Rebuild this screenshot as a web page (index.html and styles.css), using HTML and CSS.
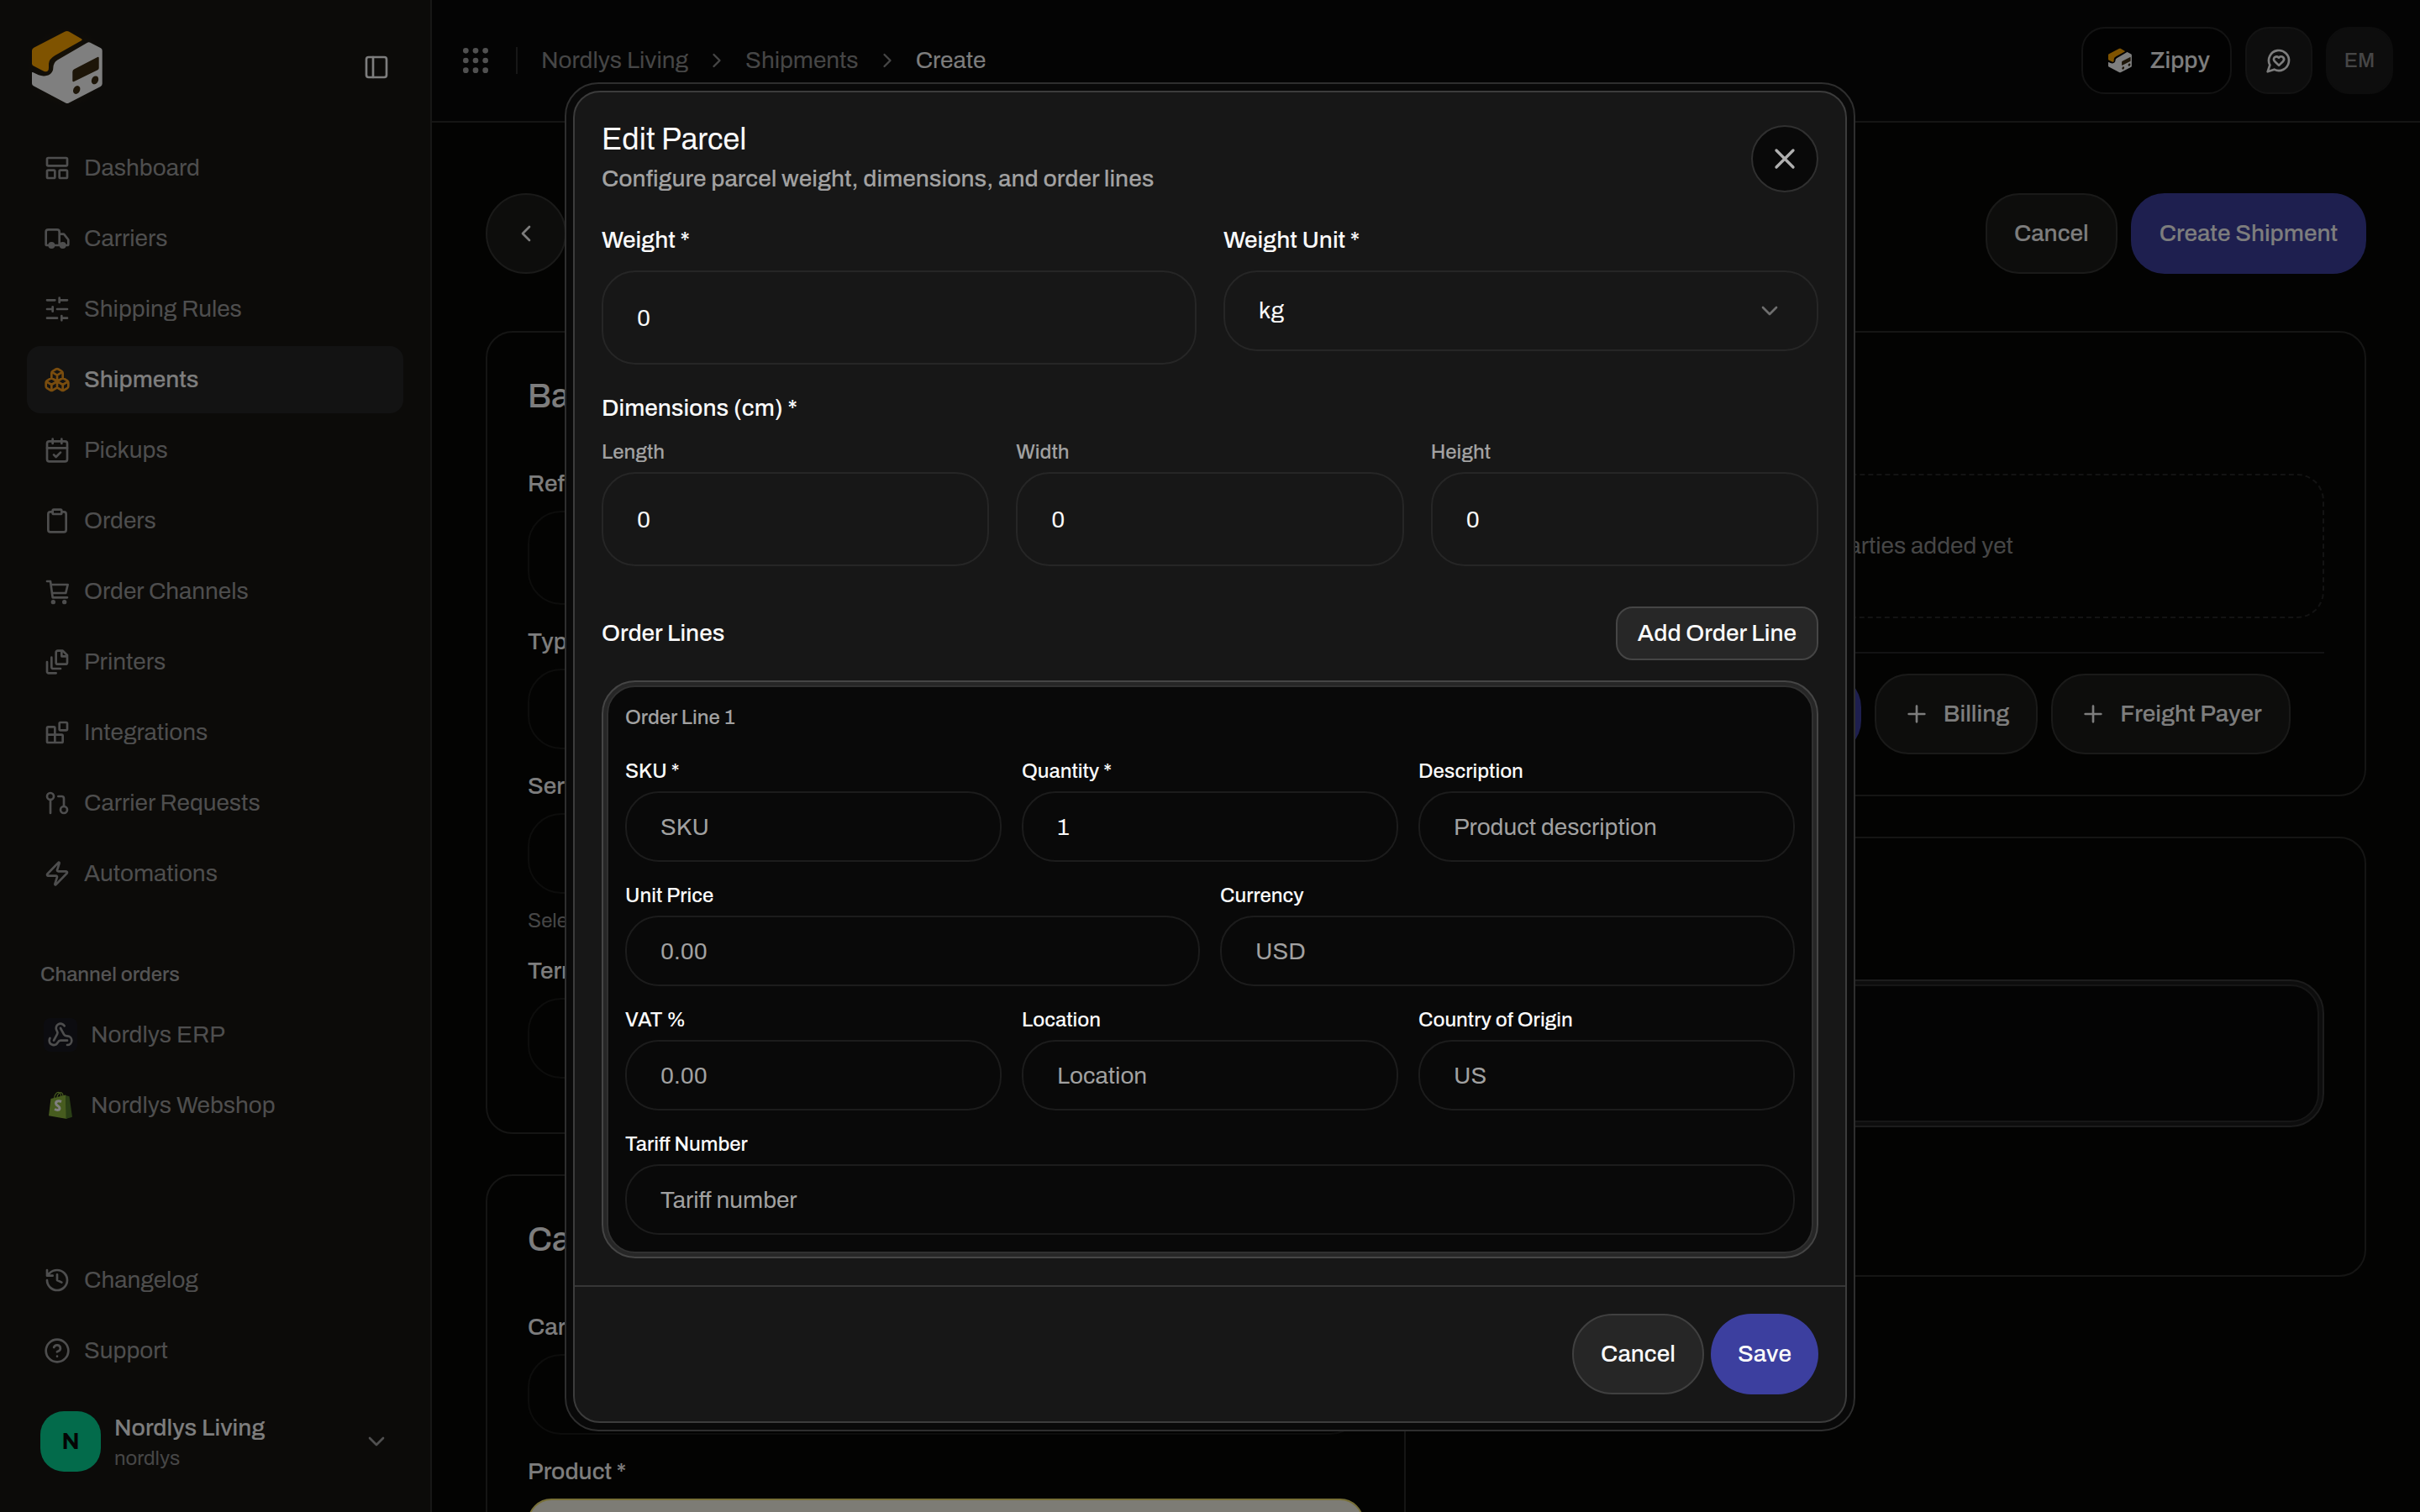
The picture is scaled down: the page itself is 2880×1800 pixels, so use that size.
FILE: index.html
```html
<!DOCTYPE html>
<html lang="en">
<head>
    <title>Create Shipment</title>
    <meta charset="UTF-8">
    <meta name="viewport" content="width=device-width, initial-scale=1.0">
    <link rel="stylesheet" href="styles.css">
</head>
<body>
    <!-- shared shapes -->
    <svg class="sprite" aria-hidden="true">
        <symbol id="logo" viewBox="0 0 96 96">
            <path fill="#ffa600" d="M45.500 5.600q2.200-1.200 4.400 0L65 14.200q1.600 1 0 2L33.500 34Q26 38.500 26 44v4.500q0 6.500-6 4.200L7.500 46.300Q6 45.400 6 43.500V28.500q0-2.500 2.300-3.800z"/>
            <path fill="#fff" d="M72 18.700q1.700-1 3.400 0L88 25.300q1.700 1 1.700 3V67.500q0 2.300-2 3.400L50 90.600q-2 1-4 0L7.800 70.300Q6 69.300 6 67.300V54.500q0-1 1-.4C13 57 17 59 21 58.400 28 58 31.300 53.500 31.300 49q0-6.500 5-9.600z"/>
            <path fill="#3a2a10" d="M56.500 50.200 84 35.900q1.700-.7 1.700 1V49q0 1.500-1.400 2.200L56.200 64.900q-1.900.8-1.900-1V53.500q0-2.200 2.200-3.300z"/>
            <ellipse cx="59.200" cy="75" rx="3.900" ry="5.200" transform="rotate(28 59.200 75)" fill="#3a2a10"/>
            <ellipse cx="81" cy="63.400" rx="3.900" ry="5.200" transform="rotate(28 81 63.400)" fill="#3a2a10"/>
        </symbol>
        <symbol id="chevron-down" viewBox="0 0 24 24"><path d="m6 9 6 6 6-6"/></symbol>
        <symbol id="chevron-right" viewBox="0 0 24 24"><path d="m9 18 6-6-6-6"/></symbol>
        <symbol id="plus" viewBox="0 0 24 24"><path d="M5 12h14M12 5v14"/></symbol>
    </svg>

    <div class="app">
        <aside class="sidebar">
            <div class="sidebar-head">
                <svg class="logo"><use href="#logo"/></svg>
                <button class="toggle" type="button" aria-label="Toggle sidebar">
                    <svg class="icon" viewBox="0 0 24 24"><rect x="3" y="3" width="18" height="18" rx="2"/><path d="M9 3v18"/></svg>
                </button>
            </div>

            <nav class="nav">
                <a class="nav-item" href="#">
                    <svg class="icon" viewBox="0 0 24 24"><rect x="3" y="3" width="18" height="7" rx="1"/><rect x="3" y="14" width="7" height="7" rx="1"/><rect x="14" y="14" width="7" height="7" rx="1"/></svg>
                    Dashboard
                </a>
                <a class="nav-item" href="#">
                    <svg class="icon" viewBox="0 0 24 24"><path d="M14 18V6a2 2 0 0 0-2-2H4a2 2 0 0 0-2 2v11a1 1 0 0 0 1 1h2M15 18H9M19 18h2a1 1 0 0 0 1-1v-3.650a1 1 0 0 0-.22-.624l-3.480-4.350A1 1 0 0 0 17.520 8H14"/><circle class="solid" cx="17" cy="18" r="2"/><circle class="solid" cx="7" cy="18" r="2"/></svg>
                    Carriers
                </a>
                <a class="nav-item" href="#">
                    <svg class="icon" viewBox="0 0 24 24"><path d="M21 4h-7M10 4H3M21 12h-9M8 12H3M21 20h-5M12 20H3M14 2v4M8 10v4M16 18v4"/></svg>
                    Shipping Rules
                </a>
                <a class="nav-item active" href="#">
                    <svg class="icon" viewBox="0 0 24 24"><path d="M2.970 12.920A2 2 0 0 0 2 14.630v3.240a2 2 0 0 0 .97 1.710l3 1.800a2 2 0 0 0 2.060 0L12 19v-5.500l-5-3-4.030 2.420ZM7 16.500l-4.740-2.850M7 16.500l5-3M7 16.500v5.170M12 13.500V19l3.970 2.380a2 2 0 0 0 2.060 0l3-1.800a2 2 0 0 0 .97-1.710v-3.240a2 2 0 0 0-.97-1.710L17 10.500l-5 3ZM17 16.500l-5-3M17 16.500l4.740-2.850M17 16.500v5.170M7.970 4.420A2 2 0 0 0 7 6.130v4.370l5 3 5-3V6.130a2 2 0 0 0-.97-1.710l-3-1.800a2 2 0 0 0-2.060 0l-3 1.800ZM12 8 7.260 5.150M12 8l4.740-2.850M12 13.500V8"/></svg>
                    Shipments
                </a>
                <a class="nav-item" href="#">
                    <svg class="icon" viewBox="0 0 24 24"><path d="M8 2v4M16 2v4M3 10h18M9 16l2 2 4-4"/><rect x="3" y="4" width="18" height="18" rx="2"/></svg>
                    Pickups
                </a>
                <a class="nav-item" href="#">
                    <svg class="icon" viewBox="0 0 24 24"><rect x="8" y="2" width="8" height="4" rx="1"/><path d="M16 4h2a2 2 0 0 1 2 2v14a2 2 0 0 1-2 2H6a2 2 0 0 1-2-2V6a2 2 0 0 1 2-2h2"/></svg>
                    Orders
                </a>
                <a class="nav-item" href="#">
                    <svg class="icon" viewBox="0 0 24 24"><path d="M3 3h3l2 14.500h13M6.500 6H21.500l-1.800 7.500H7.500"/><circle class="solid" cx="8.500" cy="21.500" r="1"/><circle class="solid" cx="18.500" cy="21.500" r="1"/></svg>
                    Order Channels
                </a>
                <a class="nav-item" href="#">
                    <svg class="icon" viewBox="0 0 24 24"><path d="M16 2v5h5M21 6v6.500c0 .8-.7 1.500-1.500 1.500h-7c-.8 0-1.500-.7-1.500-1.500v-9c0-.8.7-1.500 1.500-1.500H17l4 4zM7 8v8.800c0 .3.200.6.400.8.200.2.500.4.800.4H15M3 12v8.800c0 .3.200.6.400.8.200.2.500.4.800.4H11"/></svg>
                    Printers
                </a>
                <a class="nav-item" href="#">
                    <svg class="icon" viewBox="0 0 24 24"><rect x="14" y="3" width="7" height="7" rx="1"/><path d="M10 21V8a1 1 0 0 0-1-1H4a1 1 0 0 0-1 1v12a1 1 0 0 0 1 1h12a1 1 0 0 0 1-1v-5a1 1 0 0 0-1-1H3"/></svg>
                    Integrations
                </a>
                <a class="nav-item" href="#">
                    <svg class="icon" viewBox="0 0 24 24"><circle cx="18" cy="18" r="3"/><circle cx="6" cy="6" r="3"/><path d="M13 6h3a2 2 0 0 1 2 2v7M6 9v12"/></svg>
                    Carrier Requests
                </a>
                <a class="nav-item" href="#">
                    <svg class="icon" viewBox="0 0 24 24"><path d="M4 14a1 1 0 0 1-.78-1.630l9.900-10.200a.5.5 0 0 1 .86.460l-1.920 6.020A1 1 0 0 0 13 10h7a1 1 0 0 1 .78 1.630l-9.900 10.200a.5.5 0 0 1-.86-.46l1.920-6.020A1 1 0 0 0 11 14z"/></svg>
                    Automations
                </a>
            </nav>

            <nav class="nav channels">
                <div class="nav-label">Channel orders</div>
                <a class="nav-item" href="#">
                    <span class="channel-icon webhook">
                        <svg class="icon" viewBox="0 0 24 24"><path d="M18 16.980h-5.990c-1.100 0-1.950.94-2.480 1.900A4 4 0 0 1 2 17c.01-.7.200-1.400.57-2M6 17l3.130-5.780c.53-.97.100-2.180-.5-3.100a4 4 0 1 1 6.890-4.060M12 6l3.130 5.730C15.660 12.700 16.900 13 18 13a4 4 0 0 1 0 8"/></svg>
                    </span>
                    Nordlys ERP
                </a>
                <a class="nav-item" href="#">
                    <svg class="channel-icon" viewBox="0 0 40 40">
                        <path fill="none" stroke="#8fb83f" stroke-width="1.200" d="M12.500 11c.5-4 3-7 5.500-6.500 2 .4 2.500 3 2.500 5.500M16 10c.5-3 3-6 5-5.300 1.800.7 2 3 2 4.300"/>
                        <path fill="#8fb83f" d="M8.500 12 26 7.500 27.500 36 6 32.200z"/>
                        <path fill="#557f2c" d="m26 7.500 1 .8 3.500 1L34 33.800 26.500 36z"/>
                        <path fill="none" stroke="#fff" stroke-width="3" d="M21 15.500c-3.500-1.500-6.500-.5-6.500 2 0 3 4.500 3 4.500 5.700 0 2.400-2.800 2.800-6 1.300"/>
                    </svg>
                    Nordlys Webshop
                </a>
            </nav>

            <nav class="nav sidebar-foot">
                <a class="nav-item" href="#">
                    <svg class="icon" viewBox="0 0 24 24"><path d="M3 12a9 9 0 1 0 9-9 9.750 9.750 0 0 0-6.740 2.740L3 8M3 3v5h5M12 7v5l4 2"/></svg>
                    Changelog
                </a>
                <a class="nav-item" href="#">
                    <svg class="icon" viewBox="0 0 24 24"><circle cx="12" cy="12" r="10"/><path d="M9.090 9a3 3 0 0 1 5.830 1c0 2-3 3-3 3M12 17h.01"/></svg>
                    Support
                </a>
            </nav>

            <button class="account" type="button">
                <span class="avatar">N</span>
                <span class="account-text">
                    <span class="account-name">Nordlys Living</span>
                    <span class="account-slug">nordlys</span>
                </span>
                <svg class="icon"><use href="#chevron-down"/></svg>
            </button>
        </aside>

        <div class="page">
            <header class="topbar">
                <svg class="grip" viewBox="0 0 24 24"><circle cx="5" cy="5" r="2"/><circle cx="12" cy="5" r="2"/><circle cx="19" cy="5" r="2"/><circle cx="5" cy="12" r="2"/><circle cx="12" cy="12" r="2"/><circle cx="19" cy="12" r="2"/><circle cx="5" cy="19" r="2"/><circle cx="12" cy="19" r="2"/><circle cx="19" cy="19" r="2"/></svg>
                <span class="divider"></span>
                <nav class="breadcrumb">
                    <a href="#">Nordlys Living</a>
                    <svg class="icon"><use href="#chevron-right"/></svg>
                    <a href="#">Shipments</a>
                    <svg class="icon"><use href="#chevron-right"/></svg>
                    <span class="current">Create</span>
                </nav>
                <div class="topbar-actions">
                    <button class="top-btn zippy" type="button"><svg><use href="#logo"/></svg>Zippy</button>
                    <button class="top-btn square" type="button" aria-label="Feedback">
                        <svg class="icon" viewBox="0 0 24 24"><path d="M7.900 20A9 9 0 1 0 4 16.100L2 22Z"/><path d="M15.800 9.200a2.500 2.500 0 0 0-3.500 0l-.3.400-.35-.3a2.420 2.420 0 1 0-3.200 3.600l3.600 3.500 3.600-3.500c1.200-1.200 1.100-2.700.2-3.700"/></svg>
                    </button>
                    <button class="top-btn square user" type="button">EM</button>
                </div>
            </header>

            <main class="main">
                <div class="page-head">
                    <button class="btn back" type="button" aria-label="Back">
                        <svg class="icon" viewBox="0 0 24 24"><path d="m15 18-6-6 6-6"/></svg>
                    </button>
                    <div class="page-actions">
                        <button class="btn" type="button">Cancel</button>
                        <button class="btn primary" type="button">Create Shipment</button>
                    </div>
                </div>

                <div class="columns">
                    <div class="column">
                        <section class="card form-card">
                            <h2>Basic</h2>
                            <div class="page-field">
                                <label for="reference">Reference</label>
                                <input class="tall" type="text" id="reference">
                            </div>
                            <div class="page-field">
                                <label for="type">Type</label>
                                <input type="text" id="type">
                            </div>
                            <div class="page-field">
                                <label for="service">Service</label>
                                <input type="text" id="service">
                                <p class="hint">Select</p>
                            </div>
                            <div class="page-field">
                                <label for="terms">Terms</label>
                                <input type="text" id="terms">
                            </div>
                        </section>
                        <section class="card form-card">
                            <h2>Carrier</h2>
                            <div class="page-field">
                                <label for="carrier">Carrier</label>
                                <input type="text" id="carrier">
                            </div>
                            <div class="page-field">
                                <label for="product">Product *</label>
                                <input class="warning" type="text" id="product">
                            </div>
                        </section>
                    </div>

                    <div class="column">
                        <section class="card">
                            <h2>Parties</h2>
                            <div class="empty">No parties added yet</div>
                            <div class="party-buttons">
                                <button class="btn primary" type="button"><svg class="icon"><use href="#plus"/></svg>Sender</button>
                                <button class="btn primary" type="button"><svg class="icon"><use href="#plus"/></svg>Receiver</button>
                                <button class="btn" type="button"><svg class="icon"><use href="#plus"/></svg>Billing</button>
                                <button class="btn" type="button"><svg class="icon"><use href="#plus"/></svg>Freight Payer</button>
                            </div>
                        </section>
                        <section class="card">
                            <h2>Parcels</h2>
                            <div class="parcel"><div class="parcel-inner">Parcel 1</div></div>
                            <button class="btn add-parcel" type="button">Add Parcel</button>
                        </section>
                    </div>
                </div>
            </main>
        </div>
    </div>

    <div class="overlay">
        <div class="modal" role="dialog" aria-labelledby="modal-title">
            <form class="modal-card">
                <div class="modal-body">
                    <div class="modal-head">
                        <div>
                            <h1 id="modal-title">Edit Parcel</h1>
                            <p>Configure parcel weight, dimensions, and order lines</p>
                        </div>
                        <button class="close" type="button" aria-label="Close">
                            <svg class="icon" viewBox="0 0 24 24"><path d="M18 6 6 18M6 6l12 12"/></svg>
                        </button>
                    </div>

                    <div class="grid two">
                        <div class="field">
                            <label for="weight">Weight *</label>
                            <input type="number" id="weight" value="0">
                        </div>
                        <div class="field">
                            <label for="unit">Weight Unit *</label>
                            <div class="select">
                                <select id="unit"><option>kg</option><option>lb</option></select>
                                <svg class="icon"><use href="#chevron-down"/></svg>
                            </div>
                        </div>
                    </div>

                    <div class="dimensions">
                        <h3>Dimensions (cm) *</h3>
                        <div class="grid three">
                            <div class="field small">
                                <label for="length">Length</label>
                                <input type="number" id="length" value="0">
                            </div>
                            <div class="field small">
                                <label for="width">Width</label>
                                <input type="number" id="width" value="0">
                            </div>
                            <div class="field small">
                                <label for="height">Height</label>
                                <input type="number" id="height" value="0">
                            </div>
                        </div>
                    </div>

                    <div class="lines-head">
                        <h3>Order Lines</h3>
                        <button class="add-line" type="button">Add Order Line</button>
                    </div>

                    <div class="line">
                        <div class="line-inner">
                            <h4>Order Line 1</h4>
                            <div class="grid three">
                                <div class="field compact">
                                    <label for="sku">SKU *</label>
                                    <input type="text" id="sku" placeholder="SKU">
                                </div>
                                <div class="field compact">
                                    <label for="quantity">Quantity *</label>
                                    <input type="number" id="quantity" value="1">
                                </div>
                                <div class="field compact">
                                    <label for="description">Description</label>
                                    <input type="text" id="description" placeholder="Product description">
                                </div>
                            </div>
                            <div class="grid two">
                                <div class="field compact">
                                    <label for="price">Unit Price</label>
                                    <input type="text" id="price" placeholder="0.00">
                                </div>
                                <div class="field compact">
                                    <label for="currency">Currency</label>
                                    <input type="text" id="currency" placeholder="USD">
                                </div>
                            </div>
                            <div class="grid three">
                                <div class="field compact">
                                    <label for="vat">VAT %</label>
                                    <input type="text" id="vat" placeholder="0.00">
                                </div>
                                <div class="field compact">
                                    <label for="location">Location</label>
                                    <input type="text" id="location" placeholder="Location">
                                </div>
                                <div class="field compact">
                                    <label for="origin">Country of Origin</label>
                                    <input type="text" id="origin" placeholder="US">
                                </div>
                            </div>
                            <div class="field compact">
                                <label for="tariff">Tariff Number</label>
                                <input type="text" id="tariff" placeholder="Tariff number">
                            </div>
                        </div>
                    </div>
                </div>

                <div class="modal-foot">
                    <button class="btn round" type="button">Cancel</button>
                    <button class="btn round primary" type="submit">Save</button>
                </div>
            </form>
        </div>
    </div>
</body>
</html>
```

FILE: styles.css
```css
* {
  box-sizing: border-box;
}

body {
  margin: 0;
  font-family: Archivo, "Liberation Sans", Arial, sans-serif;
  font-size: 28px;
  line-height: 40px;
  background-color: #060604;
  color: #fafafa;
}

h1, h2, h3, h4, p {
  margin: 0;
  font-weight: normal;
}

button, input, select {
  font: inherit;
  color: inherit;
}

button, label, h2, h3, h4 {
  font-weight: 500;
}

h3 {
  font-size: 28px;
}

button {
  cursor: pointer;
}

a {
  color: inherit;
  text-decoration: none;
}

.sprite {
  display: none;
}

.icon {
  width: 32px;
  height: 32px;
  flex: none;
  fill: none;
  stroke: currentColor;
  stroke-width: 2;
  stroke-linecap: round;
  stroke-linejoin: round;
}

.solid {
  fill: currentColor;
}

.app {
  display: flex;
  height: 100vh;
  overflow: hidden;
}

/* sidebar */
.sidebar {
  display: flex;
  flex-direction: column;
  flex: none;
  width: 514px;
  padding: 32px;
  background-color: #181613;
  border-right: 2px solid #2e2e2d;
}

.sidebar-head {
  display: flex;
  align-items: center;
  justify-content: space-between;
  margin-bottom: 32px;
}

.logo {
  width: 96px;
  height: 96px;
  background: radial-gradient(#34260c, #181613 72%);
}

.toggle {
  display: flex;
  padding: 16px;
  background: none;
  border: none;
}

.nav {
  display: flex;
  flex-direction: column;
  gap: 4px;
}

.nav-item {
  display: flex;
  align-items: center;
  gap: 16px;
  height: 80px;
  padding: 0 20px;
  border-radius: 16px;
  color: #9c9c9c;
}

.nav-item.active {
  background-color: #262626;
  color: #fafafa;
  font-weight: 500;
}

.nav-item.active .icon {
  color: #f59a1c;
}

.channels {
  margin-top: 48px;
}

.nav-label {
  padding: 0 16px;
  margin-bottom: -4px;
  font-size: 24px;
  font-weight: 500;
  line-height: 64px;
  color: #a8a8a8;
}

.channel-icon {
  display: flex;
  align-items: center;
  justify-content: center;
  width: 40px;
  height: 40px;
}

.webhook {
  background-color: #191921;
  border-radius: 8px;
}

.sidebar-foot {
  margin-top: auto;
}

.account {
  display: flex;
  align-items: center;
  gap: 16px;
  margin-top: 16px;
  padding: 16px;
  background: none;
  border: none;
  text-align: left;
}

.account .icon {
  margin-left: auto;
  color: #a1a1a1;
}

.avatar {
  width: 72px;
  line-height: 72px;
  border-radius: 28px;
  background-color: #06d696;
  color: #0a0a0a;
  font-weight: bold;
  text-align: center;
}

.account-text {
  display: flex;
  flex-direction: column;
}

.account-slug {
  font-size: 24px;
  font-weight: 400;
  line-height: 32px;
  color: #8c8c8c;
}

/* top bar */
.page {
  flex: 1;
  min-width: 0;
}

.topbar {
  display: flex;
  align-items: center;
  gap: 28px;
  padding: 32px;
  background-color: #090909;
  border-bottom: 2px solid #2a2a28;
}

.grip {
  width: 40px;
  height: 40px;
  fill: #a1a1a1;
}

.divider {
  width: 2px;
  height: 32px;
  background-color: #2e2e2e;
}

.breadcrumb {
  display: flex;
  align-items: center;
  gap: 20px;
  color: #8c8c8c;
}

.breadcrumb .icon {
  width: 28px;
  height: 28px;
}

.current {
  color: #fafafa;
}

.topbar-actions {
  display: flex;
  gap: 16px;
  margin-left: auto;
}

.top-btn {
  display: flex;
  align-items: center;
  justify-content: center;
  height: 80px;
  padding: 0;
  border: 2px solid #262626;
  border-radius: 28px;
  background-color: #1a1a1a;
}

.zippy {
  gap: 20px;
  padding: 0 24px 0 28px;
  background-color: #050505;
}

.zippy svg {
  width: 32px;
  height: 32px;
}

.square {
  width: 80px;
}

.user {
  border-color: #1a1a1a;
  font-size: 24px;
  color: #8c8c8c;
}

/* buttons */
.btn {
  display: flex;
  align-items: center;
  justify-content: center;
  gap: 16px;
  height: 96px;
  padding: 0 32px;
  border: 2px solid #343432;
  border-radius: 40px;
  background-color: #1b1b19;
}

.btn.primary {
  border: none;
  background-color: #3c3f9f;
}

.btn.back {
  width: 96px;
  padding: 0;
  border-radius: 50%;
}

.btn.round {
  border-radius: 48px;
}

/* page content */
.main {
  padding: 84px 64px 0;
}

.page-head {
  display: flex;
  justify-content: space-between;
  margin-bottom: 68px;
}

.page-actions {
  display: flex;
  gap: 16px;
}

.page-actions .primary {
  border: 2px solid #3c3f9f;
}

.columns {
  display: grid;
  grid-template-columns: 1fr 1fr;
  gap: 48px;
}

.column {
  display: flex;
  flex-direction: column;
  gap: 48px;
  min-width: 0;
}

.card {
  padding: 48px;
  border: 2px solid #2a2a28;
  border-radius: 32px;
}

.form-card {
  padding-bottom: 64px;
}

.card h2 {
  margin-bottom: 64px;
  font-size: 40px;
  line-height: 56px;
}

.page-field {
  display: flex;
  flex-direction: column;
  margin-top: 32px;
}

.page-field label {
  margin-bottom: 20px;
  line-height: 24px;
}

.page-field input {
  height: 96px;
  padding: 0 40px;
  border: 2px solid #1a1a18;
  border-radius: 40px;
  background: none;
}

.page-field .tall {
  height: 112px;
}

.page-field .warning {
  border-color: #f0e070;
  border-radius: 28px;
  background-color: #fbf8ea;
}

.hint {
  margin-top: 16px;
  font-size: 24px;
  line-height: 32px;
  color: #8c8c8c;
}

.empty {
  padding: 64px;
  border: 2px dashed #262626;
  border-radius: 32px;
  color: #8c8c8c;
  text-align: center;
}

.party-buttons {
  display: flex;
  gap: 16px;
  margin-top: 40px;
  padding-top: 24px;
  border-top: 2px solid #262626;
}

.parcel {
  padding: 4px;
  border: 2px solid #383838;
  border-radius: 40px;
  background-color: #1a1a1a;
}

.parcel-inner {
  padding: 60px 32px;
  border: 2px solid #2c2c2c;
  border-radius: 34px;
  background-color: #080808;
}

.add-parcel {
  margin-top: 32px;
}

/* modal */
.overlay {
  position: fixed;
  inset: 0;
  display: flex;
  align-items: center;
  justify-content: center;
  padding-top: 2px;
  background-color: rgba(0, 0, 0, 0.5);
}

.modal {
  width: 100%;
  max-width: 1536px;
  padding: 8px;
  border: 2px solid #2e2e2e;
  border-radius: 40px;
  background-color: #090909;
}

.modal-card {
  border: 2px solid #3c3c3c;
  border-radius: 32px;
  background-color: #171717;
}

.modal-body {
  padding: 32px;
}

.modal-head {
  display: flex;
  align-items: center;
  justify-content: space-between;
  margin-bottom: 30px;
}

.modal-head h1 {
  font-size: 36px;
  line-height: 48px;
}

.modal-head p {
  font-weight: 500;
  line-height: 46px;
  color: #a1a1a1;
}

.close {
  display: flex;
  align-items: center;
  justify-content: center;
  width: 80px;
  height: 80px;
  padding: 0;
  border: 2px solid #303030;
  border-radius: 50%;
  background-color: #090909;
  color: #b0b0b0;
}

.close .icon {
  width: 40px;
  height: 40px;
}

.grid {
  display: grid;
  gap: 32px;
  align-items: start;
}

.two {
  grid-template-columns: repeat(2, 1fr);
}

.three {
  grid-template-columns: repeat(3, 1fr);
}

.field {
  display: flex;
  flex-direction: column;
  gap: 16px;
  min-width: 0;
}

.field input {
  width: 100%;
  height: 112px;
  padding: 0 40px;
  border: 2px solid #262626;
  border-radius: 40px;
  background: none;
}

input[type="number"] {
  appearance: textfield;
  -moz-appearance: textfield;
}

input::placeholder {
  color: #a1a1a1;
  opacity: 1;
}

.small,
.compact {
  gap: 8px;
}

.small label {
  font-size: 24px;
  line-height: 32px;
  color: #a1a1a1;
}

.compact label {
  font-size: 24px;
  line-height: 32px;
}

.compact input {
  height: 84px;
  border-color: #1c1c1c;
}

.select {
  position: relative;
}

.select select {
  width: 100%;
  height: 96px;
  padding: 0 40px;
  border: 2px solid #262626;
  border-radius: 40px;
  background: none;
  appearance: none;
}

.select .icon {
  position: absolute;
  top: 32px;
  right: 42px;
  color: #6e6e6e;
  pointer-events: none;
}

.dimensions {
  margin-top: 32px;
}

.dimensions h3 {
  margin-bottom: 16px;
}

.lines-head {
  display: flex;
  align-items: center;
  justify-content: space-between;
  margin: 48px 0 24px;
}

.add-line {
  height: 64px;
  padding: 0 24px;
  border: 2px solid #454545;
  border-radius: 20px;
  background-color: #272727;
}

.line {
  padding: 4px;
  border: 2px solid #454545;
  border-radius: 40px;
  background-color: #262626;
}

.line-inner {
  display: flex;
  flex-direction: column;
  gap: 24px;
  padding: 20px;
  border: 2px solid #303030;
  border-radius: 34px;
  background-color: #090909;
}

.line-inner h4 {
  margin-bottom: 8px;
  font-size: 24px;
  line-height: 32px;
  color: #a1a1a1;
}

.line-inner .grid {
  gap: 24px;
}

.modal-foot {
  display: flex;
  justify-content: flex-end;
  gap: 8px;
  padding: 32px;
  border-top: 2px solid #363636;
}

.modal-foot .btn {
  border-color: #404040;
  background-color: #262626;
}

.modal-foot .primary {
  background-color: #3c3f9f;
}
```
